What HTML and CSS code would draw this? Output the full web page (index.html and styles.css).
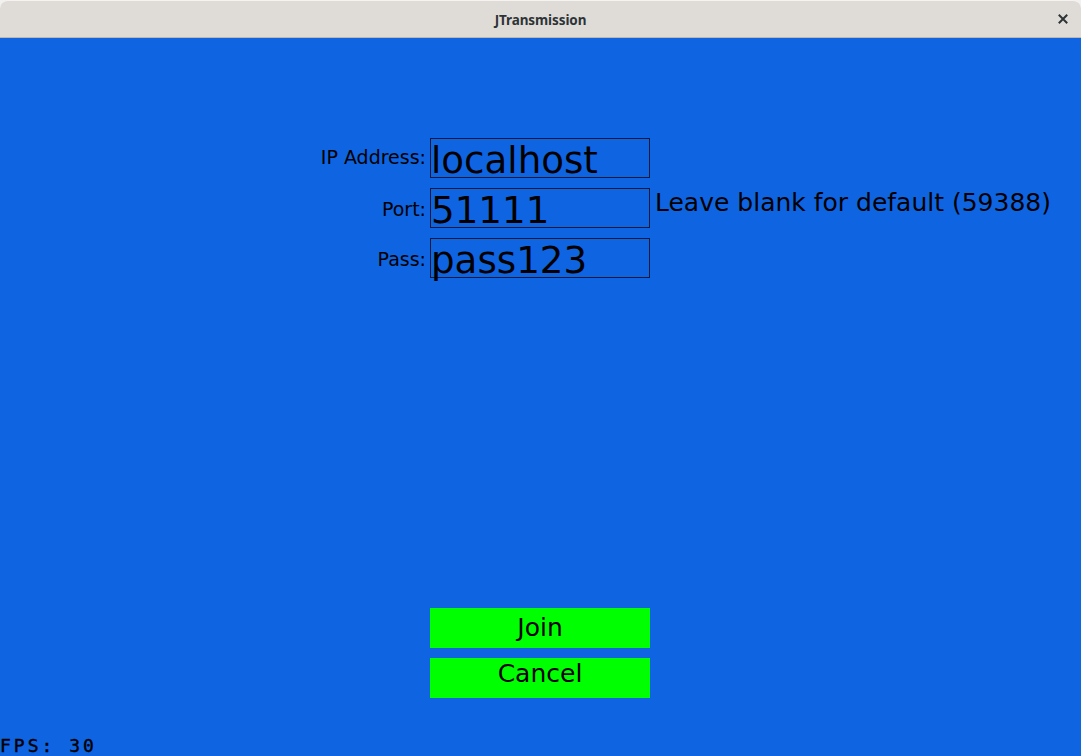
FILE: index.html
```html
<!DOCTYPE html>
<html>
<head>
<meta charset="utf-8">
<title>JTransmission</title>
<link rel="stylesheet" href="styles.css">
</head>
<body>
<div class="window">
  <header class="titlebar">
    <span class="title">JTransmission</span>
    <button class="close" aria-label="Close">
      <svg width="10" height="10" viewBox="0 0 10 10"><path d="M1.5 1.5 L8.5 8.5 M8.5 1.5 L1.5 8.5" stroke="#2e3436" stroke-width="2" stroke-linecap="square"/></svg>
    </button>
  </header>
  <main class="canvas">
    <div class="form">
      <div class="row">
        <span class="label label-ip">IP Address:</span>
        <div class="field">localhost</div>
      </div>
      <div class="row">
        <span class="label">Port:</span>
        <div class="field">51111</div>
        <span class="hint">Leave blank for default (59388)</span>
      </div>
      <div class="row">
        <span class="label">Pass:</span>
        <div class="field">pass123</div>
      </div>
    </div>
    <div class="actions">
      <div class="btn btn-join">Join</div>
      <div class="btn btn-cancel">Cancel</div>
    </div>
    <div class="fps">FPS: 30</div>
  </main>
</div>
</body>
</html>
```

FILE: styles.css
```css
html, body {
  margin: 0;
  padding: 0;
  background: #f2f1f0;
}
.window {
  width: 1081px;
  height: 756px;
  display: flex;
  flex-direction: column;
  overflow: hidden;
}
.titlebar {
  background: #dfdcd8;
  border-top: 1px solid #f4f3f1;
  border-bottom: 1px solid #bfb8b1;
  box-sizing: border-box;
  height: 38px;
  flex: 0 0 38px;
  border-radius: 8px 8px 0 0;
  display: flex;
  align-items: center;
  justify-content: center;
  position: relative;
}
.title {
  font-family: "Noto Sans", "DejaVu Sans", sans-serif;
  font-weight: bold;
  font-size: 13.5px;
  color: #2e3436;
  letter-spacing: -0.1px;
  padding-top: 1px;
}
.close {
  position: absolute;
  right: 13px;
  top: 13px;
  width: 10px;
  height: 10px;
  padding: 0;
  border: 0;
  background: none;
  display: flex;
}
.canvas {
  flex: 1;
  background: #0f64e2;
  display: flex;
  flex-direction: column;
  font-family: "DejaVu Sans", sans-serif;
  color: #000;
}
.form {
  padding-top: 100px;
  display: flex;
  flex-direction: column;
  gap: 10px;
}
.row {
  display: grid;
  grid-template-columns: 430px 220px auto;
  height: 40px;
}
.label {
  font-size: 19px;
  text-align: right;
  padding-right: 4px;
  line-height: 40px;
  padding-top: 1px;
}
.label-ip {
  padding-top: 0;
  line-height: 38px;
}
.field {
  box-sizing: border-box;
  height: 40px;
  border: 1px solid #0a1a3a;
  font-size: 37.2px;
  line-height: 42px;
  padding-left: 0;
  white-space: nowrap;
}
.hint {
  font-size: 25px;
  padding-left: 5px;
  line-height: 30px;
  white-space: nowrap;
}
.actions {
  margin-top: 330px;
  margin-left: 430px;
  width: 220px;
  display: flex;
  flex-direction: column;
  gap: 10px;
}
.btn {
  height: 40px;
  box-sizing: border-box;
  background: #00ff00;
  text-align: center;
  font-size: 25px;
}
.btn-join {
  line-height: 40px;
}
.btn-cancel {
  line-height: 31px;
}
.fps {
  margin-top: auto;
  font-family: "DejaVu Sans Mono", monospace;
  font-size: 18px;
  letter-spacing: 3px;
  line-height: 18px;
  padding-bottom: 1px;
  -webkit-text-stroke: 0.4px #000;
}
```
